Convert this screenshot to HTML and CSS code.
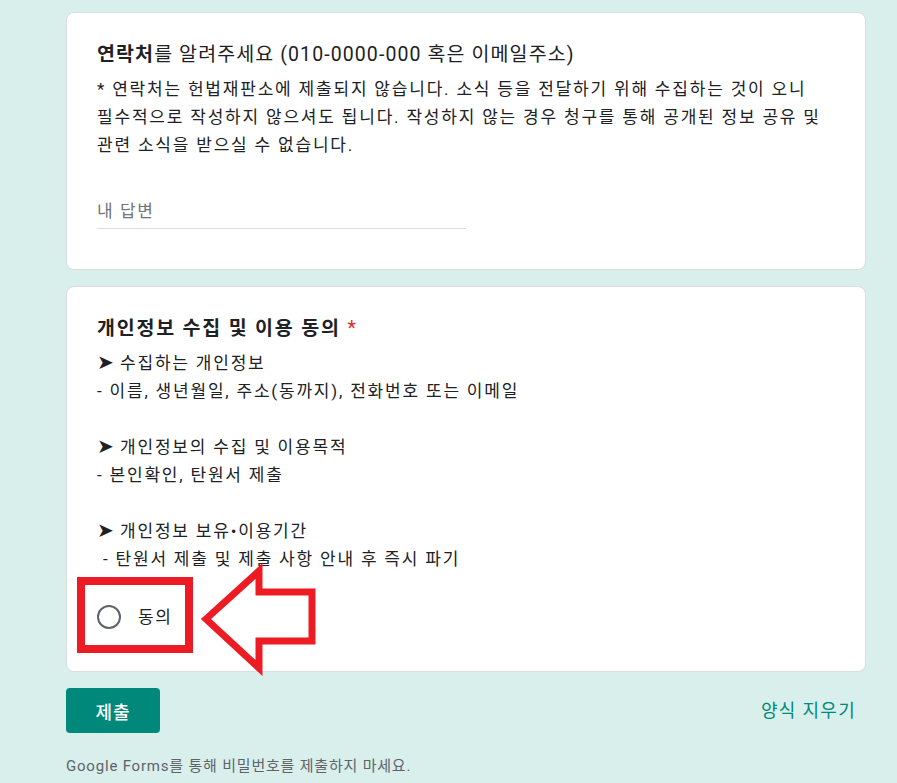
FILE: index.html
```html
<!DOCTYPE html>
<html lang="ko">
<head>
<meta charset="utf-8">
<link rel="stylesheet" href="styles.css">
</head>
<body>
<div class="page">
  <section class="card card-contact">
    <div class="q-title"><b>연락처</b>를 알려주세요 (010-0000-000 혹은 이메일주소)</div>
    <div class="q-desc">* 연락처는 헌법재판소에 제출되지 않습니다. 소식 등을 전달하기 위해 수집하는 것이 오니<br>필수적으로 작성하지 않으셔도 됩니다. 작성하지 않는 경우 청구를 통해 공개된 정보 공유 및<br>관련 소식을 받으실 수 없습니다.</div>
    <div class="answer"><div class="answer-input">내 답변</div></div>
  </section>

  <section class="card card-consent">
    <div class="q-title q-bold">개인정보 수집 및 이용 동의 <span class="req">*</span></div>
    <div class="q-desc"><span class="bullet">➤</span> 수집하는 개인정보<br>- 이름, 생년월일, 주소(동까지), 전화번호 또는 이메일<br><br><span class="bullet">➤</span> 개인정보의 수집 및 이용목적<br>- 본인확인, 탄원서 제출<br><br><span class="bullet">➤</span> 개인정보 보유•이용기간<br>&nbsp;- 탄원서 제출 및 제출 사항 안내 후 즉시 파기</div>
    <div class="option">
      <span class="radio"></span>
      <span class="option-label">동의</span>
    </div>
  </section>

  <div class="actions">
    <button class="submit">제출</button>
    <span class="clear">양식 지우기</span>
  </div>

  <div class="footer">Google Forms를 통해 비밀번호를 제출하지 마세요.</div>
</div>

<svg class="annot" width="897" height="783" viewBox="0 0 897 783">
  <rect x="81" y="581" width="108" height="68" fill="none" stroke="#ed1c24" stroke-width="8"/>
  <polygon points="206,619 259,571 259,592 312,592 312,641 259,641 259,668" fill="none" stroke="#ed1c24" stroke-width="7" stroke-linejoin="miter"/>
</svg>
</body>
</html>
```

FILE: styles.css
```css
html, body {
  margin: 0;
  padding: 0;
}
body {
  background: #d9efec;
  font-family: Roboto, "Noto Sans CJK KR", sans-serif;
  color: #202124;
  width: 897px;
  height: 783px;
  overflow: hidden;
  position: relative;
}
.page {
  padding: 12px 0 0 66px;
  width: 800px;
}
.card {
  background: #fff;
  border: 1px solid #dadce0;
  border-radius: 8px;
  padding: 28px 30px 0 30px;
  margin-bottom: 16px;
}
.card-contact {
  padding-bottom: 40px;
}
.card-consent {
  padding-bottom: 30px;
}
.q-title {
  font-size: 19.5px;
  line-height: 28px;
  letter-spacing: 1.1px;
  white-space: nowrap;
}
.q-title b,
.q-bold {
  font-weight: 700;
}
.q-bold {
  letter-spacing: 1.8px;
}
.req {
  color: #d93025;
  font-weight: 400;
}
.q-desc {
  margin-top: 6px;
  font-size: 17px;
  line-height: 28px;
  letter-spacing: 1.8px;
  white-space: nowrap;
}
.bullet {
  font-size: 20px;
  letter-spacing: 0;
  line-height: 20px;
}
.answer {
  margin-top: 40px;
  width: 369px;
}
.answer-input {
  font-size: 17px;
  line-height: 24px;
  letter-spacing: 1.6px;
  color: #70757a;
  padding-bottom: 5px;
  border-bottom: 1px solid #dadce0;
}
.option {
  display: flex;
  align-items: center;
  height: 48px;
  margin-top: 20px;
}
.radio {
  width: 20px;
  height: 20px;
  border: 2px solid #5f6368;
  border-radius: 50%;
  flex: none;
}
.option-label {
  margin-left: 17px;
  font-size: 17px;
  line-height: 24px;
  letter-spacing: 1.6px;
}
.actions {
  display: flex;
  justify-content: space-between;
  align-items: center;
  padding-right: 10px;
}
.submit {
  width: 94px;
  height: 45px;
  background: #00897b;
  color: #fff;
  border: none;
  border-radius: 4px;
  font-family: Roboto, "Noto Sans CJK KR", sans-serif;
  font-size: 18px;
  font-weight: 500;
  letter-spacing: 1px;
  padding: 0;
}
.clear {
  color: #00897b;
  font-size: 18px;
  line-height: 24px;
  letter-spacing: 1.3px;
}
.footer {
  margin-top: 22px;
  font-size: 15px;
  line-height: 22px;
  letter-spacing: 0.8px;
  color: #5f6368;
}
.annot {
  position: absolute;
  left: 0;
  top: 0;
  pointer-events: none;
}
```
